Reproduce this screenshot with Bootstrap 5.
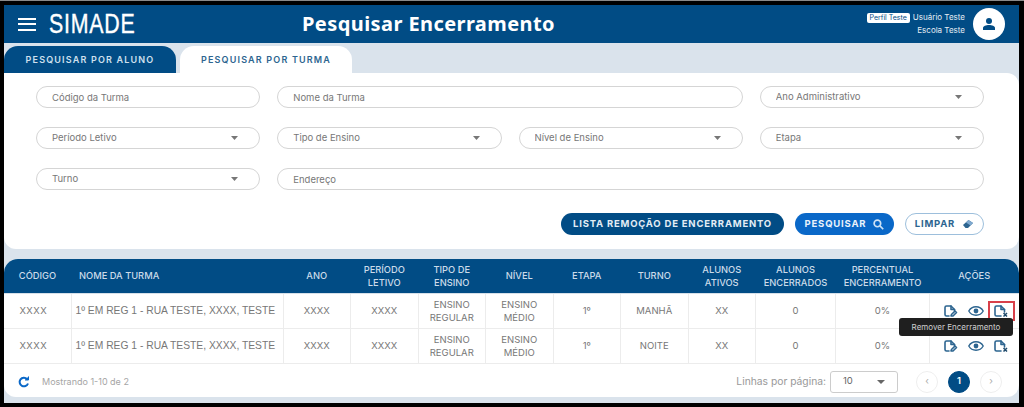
<!DOCTYPE html>
<html lang="pt-BR">
  <head>
    <meta charset="UTF-8" />
    <meta name="viewport" content="width=device-width, initial-scale=1.0" />
    <title>Pesquisar Encerramento</title>
    <link href="https://cdn.jsdelivr.net/npm/bootstrap@5.3.3/dist/css/bootstrap.min.css" rel="stylesheet" />
    <style>
      html, body { height: 407px; overflow: hidden; }
      body { background: #000; padding: 4px 5px 4px 4px; border-top: 1px solid #8a8a8a; font-family: Inter, "Liberation Sans", sans-serif; }
      .shell { background: #dae3ec; height: 398px; position: relative; }

      .top-bar { background: #014c85; height: 38px; color: #fff; }
      .brand-box { width: 298px; padding-left: 14px; }
      .burger { width: 18px; height: 13px; border-top: 2px solid #fff; border-bottom: 2px solid #fff; position: relative; flex: none; }
      .burger::after { content: ""; position: absolute; left: 0; right: 0; top: 3.5px; height: 2px; background: #fff; }
      .brand-name { font: 400 27px/1 "Liberation Sans", sans-serif; letter-spacing: 1px; margin-left: 13px; transform: scaleX(.79); transform-origin: left center; -webkit-text-stroke: .4px #fff; }
      .page-name { font: 700 20px/1 "Noto Sans", sans-serif; letter-spacing: .42px; }
      .user-box { font-size: 8px; line-height: 13px; text-align: right; margin-right: 8px; color: #e6edf4; }
      .profile-tag { display: inline-block; background: #fff; color: #014c85; border-radius: 2px; padding: 0 3px; height: 10px; line-height: 10px; font-size: 7px; margin-right: 3px; }
      .avatar { width: 32px; height: 32px; background: #fff; border-radius: 50%; margin-right: 14px; }

      .tab-row { padding-top: 3px; height: 30px; gap: 4px; }
      .tab-item { width: 172px; height: 27px; border-radius: 14px 14px 0 0; font-size: 9px; font-weight: 600; letter-spacing: 1.18px; }
      .tab-dark { background: #014c85; color: #cfe0ee; }
      .tab-light { background: #fff; color: #2d6590; }

      .search-card { background: #fff; height: 176px; border-radius: 0 12px 12px 12px; padding: 13px 35px 0 32px; }
      .field-row { --bs-gutter-x: 17px; margin-bottom: 19px; }
      .field-row .form-control, .field-row .form-select {
        height: 22px; min-height: 0; border-radius: 11px; border: 1px solid #d5d5d5; padding: 0 15px; font-size: 9.5px; color: #777; box-shadow: none;
      }
      .field-row .form-control::placeholder { color: #777; opacity: 1; }
      .field-row .form-select {
        background-image: url("data:image/svg+xml,%3csvg xmlns='http://www.w3.org/2000/svg' viewBox='0 0 8 4'%3e%3cpath d='M0 0h8L4 4z' fill='%23777'/%3e%3c/svg%3e");
        background-size: 7px 3.5px; background-position: right 21px center;
      }
      .action-row { gap: 11px; padding-top: 4px; }
      .pill-btn { height: 22px; border-radius: 11px; font-size: 9.5px; font-weight: 700; letter-spacing: .8px; padding: 0; border: 1px solid transparent; }
      .pill-btn svg { margin-left: 4px; }
      .pill-dark { width: 223px; background: #014c85; color: #e4edf5; }
      .pill-blue { width: 99px; background: #0a68c8; color: #e9f2fb; }
      .pill-line { width: 79px; background: #fff; color: #2d6590; border-color: #9dbfdc; }

      .table-card { margin-top: 10px; background: #fff; border-radius: 14px 14px 12px 12px; overflow: hidden; }
      .data-grid { table-layout: fixed; width: 100%; margin: 0; font-size: 9.5px; }
      .data-grid th { background: #014c85; color: #cbdbe9; height: 34px; font-size: 9.3px; font-weight: 500; line-height: 13px; text-align: center; vertical-align: middle; padding: 0; border: 0; border-bottom: 1px solid #d6e0e9; }
      .data-grid td { height: 35px; color: #777; text-align: center; vertical-align: middle; padding: 0; line-height: 13px; border: 0; border-right: 1px solid #ececec; border-bottom: 1px solid #ececec; }
      .data-grid td:first-child { padding-right: 8px; letter-spacing: .4px; }
      .data-grid td:last-child { border-right: 0; }
      .data-grid .name-cell { font-family: "Liberation Sans", sans-serif; font-size: 10.3px; white-space: nowrap; text-align: left; padding-left: 4px; }
      .data-grid th.name-cell { font-family: Inter, sans-serif; font-size: 9.3px; padding-left: 8px; }
      .col-a { width: 67px; } .col-b { width: 212px; } .col-c { width: 67.5px; } .col-d { width: 80px; } .col-e { width: 94px; }
      .act-icons { padding-left: 3px; }
      .act-icon { width: 25px; height: 18px; }
      .act-flag { outline: 2px solid #d8404a; outline-offset: -1px; }

      .grid-foot { height: 33px; padding: 3px 17px 0 14px; font-size: 9px; color: #a5a5a5; }
      .foot-label { color: #999; font-size: 10.3px; margin-right: 4px; }
      .size-box { width: 68px; height: 22px; border: 1px solid #ccc; border-radius: 3px; color: #666; font-size: 9.5px; padding: 0 12px; margin-right: 18px; }
      .size-arrow { width: 0; height: 0; border-left: 4px solid transparent; border-right: 4px solid transparent; border-top: 4px solid #666; }
      .page-dot { width: 22px; height: 22px; border-radius: 50%; border: 1px solid #eee; color: #aaa; margin-right: 10px; font-size: 9.5px; }
      .page-dot:last-child { margin-right: 0; }
      .page-now { background: #014c85; border-color: #014c85; color: #fff; font-weight: 600; }

      .hint-box { position: absolute; left: 895px; top: 313px; width: 114px; height: 18px; background: #1f1f1f; color: #cfcfcf; border-radius: 3px; font-size: 8px; line-height: 18px; text-align: center; }
    </style>
  </head>
  <body>
    <svg width="0" height="0" class="d-block">
      <symbol id="doc-edit" viewBox="0 0 14 12">
        <g fill="none" stroke="#2d6590" stroke-width="1.6" stroke-linejoin="round" stroke-linecap="round">
          <path d="M5 11H2.500Q1 11 1 9.500v-7Q1 1 2.500 1H7l3.500 3.500V6"/>
          <path d="M7 1v3.500h3.500"/>
          <path d="M7 11l.5-1.500L11 6l1.500 1.500L9 11z"/>
        </g>
      </symbol>
      <symbol id="doc-eye" viewBox="0 0 16 10">
        <path d="M.8 5C2.300 2.300 5 .8 8 .8s5.700 1.500 7.200 4.200C13.700 7.700 11 9.200 8 9.200S2.300 7.700.8 5z" fill="none" stroke="#2d6590" stroke-width="1.400"/>
        <circle cx="8" cy="5" r="2.400" fill="#2d6590"/>
      </symbol>
      <symbol id="doc-drop" viewBox="0 0 15 12">
        <g fill="none" stroke="#2d6590" stroke-width="1.6" stroke-linejoin="round" stroke-linecap="round">
          <path d="M7 11H2.500Q1 11 1 9.500v-7Q1 1 2.500 1H7l3.500 3.500V7"/>
          <path d="M7 1v3.500h3.500"/>
        </g>
        <path d="M9.500 8l3.500 3.500M13 8l-3.500 3.500" stroke="#1f4a6b" stroke-width="1.500"/>
      </symbol>
    </svg>
    <div class="shell">
      <div class="top-bar d-flex align-items-center">
        <div class="brand-box d-flex align-items-center">
          <div class="burger"></div>
          <span class="brand-name">SIMADE</span>
        </div>
        <span class="page-name">Pesquisar Encerramento</span>
        <div class="user-box ms-auto">
          <div><span class="profile-tag">Perfil Teste</span>Usuário Teste</div>
          <div>Escola Teste</div>
        </div>
        <div class="avatar d-flex align-items-center justify-content-center">
          <svg width="14" height="14" viewBox="0 0 14 14"><circle cx="7" cy="4" r="3" fill="#014c85"/><path d="M1 13v-2c0-2 3-3 6-3s6 1 6 3v2z" fill="#014c85"/></svg>
        </div>
      </div>

      <div class="tab-row d-flex">
        <div class="tab-item tab-dark d-flex align-items-center justify-content-center">PESQUISAR POR ALUNO</div>
        <div class="tab-item tab-light d-flex align-items-center justify-content-center">PESQUISAR POR TURMA</div>
      </div>

      <div class="search-card">
        <div class="row field-row">
          <div class="col-3"><input class="form-control" placeholder="Código da Turma" /></div>
          <div class="col-6"><input class="form-control" placeholder="Nome da Turma" /></div>
          <div class="col-3"><select class="form-select"><option>Ano Administrativo</option></select></div>
        </div>
        <div class="row field-row">
          <div class="col-3"><select class="form-select"><option>Período Letivo</option></select></div>
          <div class="col-3"><select class="form-select"><option>Tipo de Ensino</option></select></div>
          <div class="col-3"><select class="form-select"><option>Nível de Ensino</option></select></div>
          <div class="col-3"><select class="form-select"><option>Etapa</option></select></div>
        </div>
        <div class="row field-row">
          <div class="col-3"><select class="form-select"><option>Turno</option></select></div>
          <div class="col-9"><input class="form-control" placeholder="Endereço" /></div>
        </div>
        <div class="action-row d-flex justify-content-end">
          <button class="btn pill-btn pill-dark">LISTA REMOÇÃO DE ENCERRAMENTO</button>
          <button class="btn pill-btn pill-blue">PESQUISAR
            <svg width="11" height="11" viewBox="0 0 10 10" fill="none" stroke="#cfe2f6" stroke-width="1.5"><circle cx="4" cy="4" r="3"/><path d="M6.300 6.300 9.300 9.300"/></svg>
          </button>
          <button class="btn pill-btn pill-line">LIMPAR
            <svg width="12" height="10" viewBox="0 0 12 10"><path d="M1 6 6.500 1l4.500 3-5 5H3.500z" fill="#2d6590"/><path d="M6.500 1 11 4 8.500 6.500 4 3.500z" fill="#7fa9d0"/></svg>
          </button>
        </div>
      </div>

      <div class="table-card">
        <table class="table data-grid">
          <colgroup>
            <col class="col-a" /><col class="col-b" /><col class="col-c" /><col class="col-c" /><col class="col-c" /><col class="col-c" /><col class="col-c" /><col class="col-c" /><col class="col-c" /><col class="col-d" /><col class="col-e" /><col />
          </colgroup>
          <thead>
            <tr>
              <th>CÓDIGO</th><th class="name-cell">NOME DA TURMA</th><th>ANO</th><th>PERÍODO<br />LETIVO</th><th>TIPO DE<br />ENSINO</th><th>NÍVEL</th><th>ETAPA</th><th>TURNO</th><th>ALUNOS<br />ATIVOS</th><th>ALUNOS<br />ENCERRADOS</th><th>PERCENTUAL<br />ENCERRAMENTO</th><th>AÇÕES</th>
            </tr>
          </thead>
          <tbody>
            <tr>
              <td>XXXX</td><td class="name-cell">1º EM REG 1 - RUA TESTE, XXXX, TESTE</td><td>XXXX</td><td>XXXX</td><td>ENSINO<br />REGULAR</td><td>ENSINO<br />MÉDIO</td><td>1º</td><td>MANHÃ</td><td>XX</td><td>0</td><td>0%</td>
              <td>
                <div class="act-icons d-flex justify-content-center">
                  <span class="act-icon d-flex align-items-center justify-content-center"><svg width="14" height="12"><use href="#doc-edit"/></svg></span>
                  <span class="act-icon d-flex align-items-center justify-content-center"><svg width="16" height="10"><use href="#doc-eye"/></svg></span>
                  <span class="act-icon act-flag d-flex align-items-center justify-content-center"><svg width="15" height="12"><use href="#doc-drop"/></svg></span>
                </div>
              </td>
            </tr>
            <tr>
              <td>XXXX</td><td class="name-cell">1º EM REG 1 - RUA TESTE, XXXX, TESTE</td><td>XXXX</td><td>XXXX</td><td>ENSINO<br />REGULAR</td><td>ENSINO<br />MÉDIO</td><td>1º</td><td>NOITE</td><td>XX</td><td>0</td><td>0%</td>
              <td>
                <div class="act-icons d-flex justify-content-center">
                  <span class="act-icon d-flex align-items-center justify-content-center"><svg width="14" height="12"><use href="#doc-edit"/></svg></span>
                  <span class="act-icon d-flex align-items-center justify-content-center"><svg width="16" height="10"><use href="#doc-eye"/></svg></span>
                  <span class="act-icon d-flex align-items-center justify-content-center"><svg width="15" height="12"><use href="#doc-drop"/></svg></span>
                </div>
              </td>
            </tr>
          </tbody>
        </table>
        <div class="grid-foot d-flex align-items-center">
          <svg class="me-2" width="12" height="12" viewBox="0 0 12 12" fill="none" stroke="#0a68c8" stroke-width="2"><path d="M10 7.500A4.300 4.300 0 1 1 9 3"/><path d="M10.500.5v3.500H7" fill="#0a68c8" stroke-width="1"/></svg>
          <span class="ms-1">Mostrando 1-10 de 2</span>
          <span class="foot-label ms-auto">Linhas por página:</span>
          <div class="size-box d-flex align-items-center justify-content-between"><span>10</span><span class="size-arrow"></span></div>
          <div class="page-dot d-flex align-items-center justify-content-center">‹</div>
          <div class="page-dot page-now d-flex align-items-center justify-content-center">1</div>
          <div class="page-dot d-flex align-items-center justify-content-center">›</div>
        </div>
      </div>
      <div class="hint-box">Remover Encerramento</div>
    </div>
    <script src="https://cdn.jsdelivr.net/npm/bootstrap@5.3.3/dist/js/bootstrap.bundle.min.js"></script>
  </body>
</html>
